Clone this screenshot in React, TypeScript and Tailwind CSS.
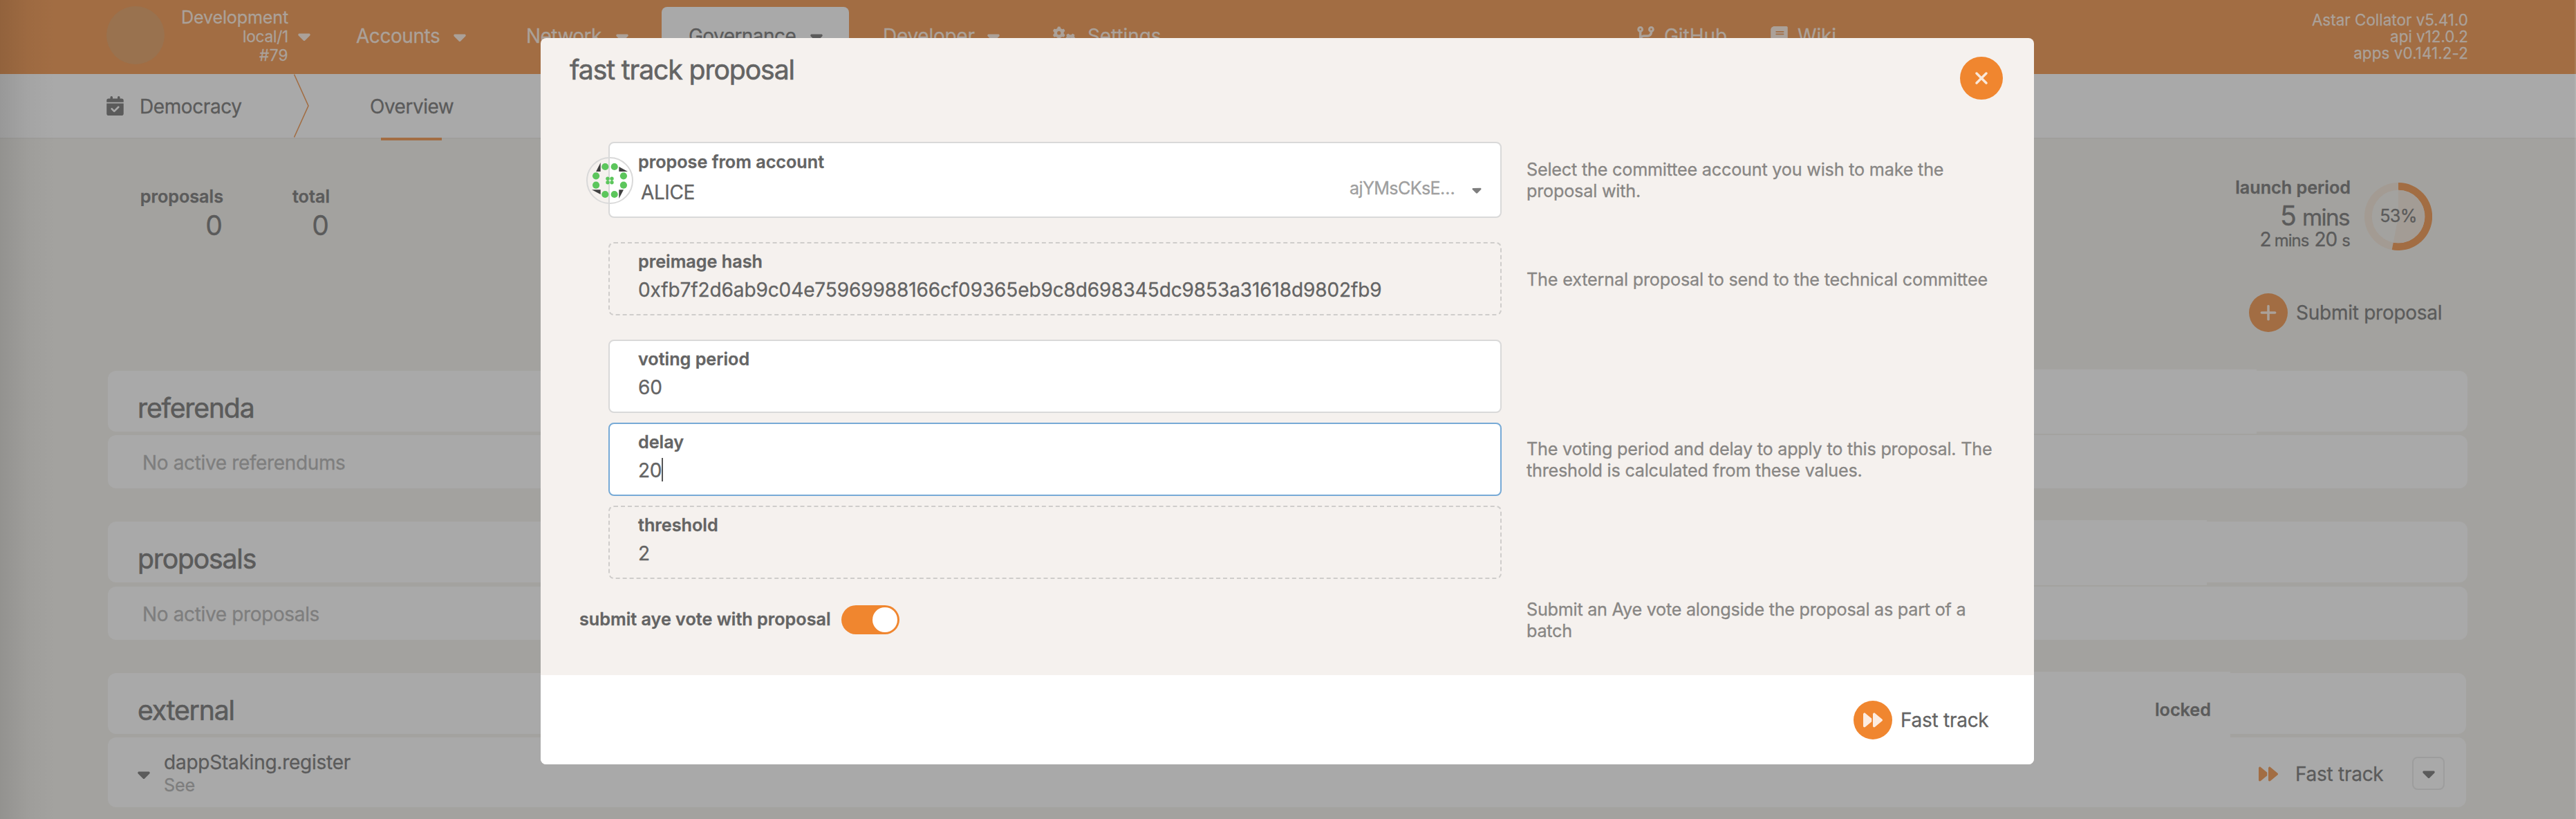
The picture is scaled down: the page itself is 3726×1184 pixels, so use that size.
import type { ReactNode } from "react";
import {
  FaBook,
  FaCalendarCheck,
  FaCaretDown,
  FaCodeBranch,
  FaForward,
  FaGears,
  FaPlus,
  FaXmark,
} from "react-icons/fa6";

function Caret({ className = "" }: { className?: string }) {
  return <FaCaretDown className={"h-[28px] w-[18px] shrink-0 " + className} />;
}

function Header() {
  return (
    <header className="flex h-[107px] items-center bg-[#a26d43] pb-[3px] text-[28px] leading-[36px] whitespace-nowrap text-[#aba199]">
      <div className="mb-[2px] ml-[154px] size-[84px] shrink-0 rounded-full bg-[#99724f]" />
      <div className="ml-[19px] w-[160px] text-right text-[22.7px] leading-[27px]">
        <div className="text-[25.2px] tracking-[-0.2px]">Development</div>
        <div className="tracking-[-0.27px]">local/1</div>
        <div className="tracking-[0.3px]">#79</div>
      </div>
      <Caret className="ml-[14px]" />
      <div className="ml-[66px] w-[141px] tracking-[-0.45px]">Accounts</div>
      <Caret className="mt-[2px]" />
      <div className="ml-[87px] w-[130px] tracking-[-0.53px]">Network</div>
      <Caret className="mt-[2px]" />
      <div className="mt-[10px] ml-[48px] flex h-[94px] w-[271px] items-center rounded-t-lg bg-[#a9a9a9] pb-[10px] pl-[39px] text-[#5b5b5b]">
        <div className="w-[176px] tracking-[-0.56px]">Governance</div>
        <Caret className="mt-[2px]" />
      </div>
      <div className="ml-[49px] w-[151px] tracking-[-0.27px]">Developer</div>
      <Caret className="mt-[2px]" />
      <FaGears className="ml-[77px] h-[28px] w-[35px] shrink-0" />
      <div className="ml-[15px] w-[110px] tracking-[-0.09px]">Settings</div>
      <FaCodeBranch className="ml-[685px] h-[28px] w-[25px] shrink-0" />
      <div className="ml-[14px] w-[95px] tracking-[-0.06px]">GitHub</div>
      <FaBook className="ml-[59px] h-[28px] w-[25px] shrink-0" />
      <div className="ml-[14px] w-[60px] tracking-[-0.13px]">Wiki</div>
      <div className="mt-[2px] mr-[156px] ml-auto text-right text-[22.4px] leading-[24.3px]">
        <div className="tracking-[0.02px]">Astar Collator v5.41.0</div>
        <div>api v12.0.2</div>
        <div className="tracking-[0.1px]">apps v0.141.2-2</div>
      </div>
    </header>
  );
}

function Tabs() {
  return (
    <nav className="flex h-[94px] items-center border-b-2 border-[#9f9e9c] bg-[#a9a9a9] text-[28px] leading-[36px] whitespace-nowrap">
      <FaCalendarCheck className="ml-[154px] h-[28px] w-[25px] shrink-0" />
      <div className="mt-[1px] ml-[23px] w-[223px] tracking-[-0.4px]">Democracy</div>
      <svg width="22" height="92" viewBox="0 0 22 92" fill="none" stroke="#a26d43" strokeWidth="1.6">
        <path d="M0.5 0.5 L21 46 L0.5 91.5" />
      </svg>
      <div className="relative ml-[88px] flex h-[92px] items-center pt-[1px] tracking-[-0.5px]">
        Overview
        <div className="absolute -bottom-[4px] left-[16px] h-[4px] w-[88px] bg-[#a26d43]" />
      </div>
    </nav>
  );
}

function Stat({ label, value, className }: { label: string; value: string; className: string }) {
  return (
    <div className={"mt-[13px] text-right " + className}>
      <div className="text-[25.2px] leading-[41px] font-semibold">{label}</div>
      <div className="pr-[2px] text-[39.2px] leading-[42px] tracking-[-1px]">{value}</div>
    </div>
  );
}

function Progress() {
  return (
    <div className="relative mt-[13px] mr-[208px] ml-[20px] flex size-[98px] shrink-0 items-center justify-center">
      <svg className="absolute inset-0" width="98" height="98" viewBox="0 0 98 98">
        <circle cx="49" cy="49" r="49" fill="#a39b93" />
        <path d="M49 49 L49 0 A49 49 0 1 1 39.8 97.1 Z" fill="#a26d43" />
        <circle cx="49" cy="49" r="38.3" fill="#a3a29f" />
        <path d="M49 49 L49 10.7 A38.3 38.3 0 1 1 41.8 86.6 Z" fill="#a39c95" />
      </svg>
      <span className="relative text-[25.2px] leading-none tracking-[-0.7px]">53%</span>
    </div>
  );
}

function Summary() {
  return (
    <section className="h-[335px] pt-[50px] whitespace-nowrap">
      <div className="flex h-[120px] items-start">
        <Stat label="proposals" value="0" className="ml-[201px] w-[122px]" />
        <Stat label="total" value="0" className="ml-[94px] w-[60px]" />
        <div className="ml-auto text-right">
          <div className="text-[25.2px] leading-[40px] font-semibold">launch period</div>
          <div className="h-[42px] pr-[2px] text-[39.2px] leading-[42px]">
            5<span className="ml-[8px] text-[33.3px] leading-none tracking-[-1.6px]">mins</span>
          </div>
          <div className="h-[26px] pr-[1px] text-[28px] leading-[26px] tracking-[-0.9px]">
            2<span className="ml-[5px] text-[23.8px] leading-none">mins</span>
            <span className="ml-[8px]">20</span>
            <span className="ml-[7px] text-[23.8px] leading-none">s</span>
          </div>
        </div>
        <Progress />
      </div>
      <div className="mt-[53px] mr-[192px] flex items-center justify-end gap-[12px]">
        <div className="flex size-[56px] items-center justify-center rounded-full bg-[#a26d43] text-[#aba199]">
          <FaPlus className="size-[28px]" />
        </div>
        <div className="w-[213px] text-[28px] leading-[36px] tracking-[-0.26px]">Submit proposal</div>
      </div>
    </section>
  );
}

function TableHead({ title, fill, children }: { title: string; fill: string; children?: ReactNode }) {
  return (
    <div className="relative flex h-[88px] items-center justify-between rounded-xl bg-[#a9a9a9] pt-[19px] pl-[43px]">
      <div className={"absolute bg-[#a9a9a9] " + fill} />
      <h1 className="relative text-[39.2px] leading-[48px] tracking-[-1.2px] [-webkit-text-stroke-width:0.6px]">{title}</h1>
      {children}
    </div>
  );
}

function EmptyRow({ text }: { text: string }) {
  return (
    <div className="mt-[5px] flex h-[77px] items-center rounded-xl bg-[#a9a9a9] pt-[3px] pl-[50px] text-[28px] tracking-[-0.36px] text-[#7e7e7e]">
      {text}
    </div>
  );
}

function Tables() {
  return (
    <main className="ml-[156px] w-[3413px] whitespace-nowrap">
      <TableHead title="referenda" fill="-top-[2px] -bottom-[3px] left-[2000px] right-[305px]" />
      <EmptyRow text="No active referendums" />
      <div className="mt-[48px]">
        <TableHead title="proposals" fill="-top-[2px] -bottom-[4px] left-[2000px] right-[377px]" />
      </div>
      <div className="mt-[6px]">
        <EmptyRow text="No active proposals" />
      </div>
      <div className="mt-[48px] w-[3411px]">
        <TableHead title="external" fill="-top-[2px] -bottom-[5px] left-[2000px] right-[341px]">
          <div className="relative mr-[369px] text-[25.2px] font-semibold">locked</div>
        </TableHead>
        <div className="mt-[5px] flex h-[101px] items-center rounded-xl bg-[#a9a9a9] pt-[4px] pr-[31px] pl-[43px] text-[28px]">
          <Caret />
          <div className="ml-[20px]">
            <div className="leading-[33px] tracking-[-0.24px]">dappStaking.register</div>
            <div className="text-[25.2px] leading-[32px] tracking-[-0.2px] text-[#7e7e7e]">See</div>
          </div>
          <FaForward className="ml-auto size-[28px] text-[#a26d43]" />
          <div className="ml-[25px] w-[169px] leading-[36px] tracking-[-0.27px]">Fast track</div>
          <div className="mb-[2px] flex h-[48px] w-[47px] items-center justify-center rounded-lg border-2 border-[#9d9d9d]">
            <Caret className="mt-[1px]" />
          </div>
        </div>
      </div>
    </main>
  );
}

const OUTER_DOTS = [
  [27.3, 14], [40.7, 14], [14.1, 27.3], [53.9, 27.3],
  [14.1, 40.7], [53.9, 40.7], [27.3, 54], [40.7, 54],
];
const INNER_DOTS = [[31, 31.2], [37, 31.2], [31, 36.8], [37, 36.8]];

function Identicon() {
  return (
    <svg className="absolute top-[20px] -left-[34px]" width="68" height="68" viewBox="0 0 68 68">
      <circle cx="34" cy="34" r="33" fill="none" stroke="#d9d9d9" strokeWidth="2" />
      <g fill="#404040">
        <path d="M14.1 21 L20.7 8 V21 Z" />
        <path d="M47.3 14 L60 21 H47.3 Z" />
        <path d="M8 47.3 H20.7 V54 Z" />
        <path d="M47.3 47.3 H54 L47.3 60 Z" />
      </g>
      <g fill="#5cc65c">
        {OUTER_DOTS.map(([x, y]) => <circle key={x + "-" + y} cx={x} cy={y} r="5.1" />)}
        {INNER_DOTS.map(([x, y]) => <circle key={x + "-" + y} cx={x} cy={y} r="2.7" />)}
      </g>
    </svg>
  );
}

function Field({ label, className, children }: { label: string; className: string; children: ReactNode }) {
  return (
    <div className={"h-[106px] w-[1292px] shrink-0 rounded-lg border-2 pt-[10px] pl-[41px] " + className}>
      <div className="text-[25.2px] leading-[32px] font-semibold">{label}</div>
      <div className="mt-[7px] flex h-[36px] items-center text-[28px] leading-[36px]">{children}</div>
    </div>
  );
}

function Help({ lines, className }: { lines: string[]; className: string }) {
  return (
    <div className={"ml-[36px] pt-[2px] text-[25.2px] leading-[30.8px] text-[#888684] " + className}>
      {lines.map((line) => <div key={line}>{line}</div>)}
    </div>
  );
}

function Modal() {
  return (
    <div className="absolute top-[55px] left-[782px] w-[2160px] overflow-hidden rounded-lg bg-[#f5f1ee] whitespace-nowrap text-[#646464]">
      <div className="flex h-[150px] items-start pr-[45px] pl-[42px]">
        <h1 className="text-[39.2px] leading-[92px] tracking-[-1.12px] [-webkit-text-stroke-width:0.6px]">
          fast track proposal
        </h1>
        <div className="mt-[27px] ml-auto flex size-[62px] items-center justify-center rounded-full bg-[#f0862f] text-[#f9e8da]">
          <FaXmark className="size-[28px]" />
        </div>
      </div>

      <div className="ml-[98px]">
        <div className="flex items-center">
          <div className="relative h-[110px] w-[1292px] shrink-0 rounded-lg border-2 border-[#d9d9d9] bg-white pt-[11px] pr-[27px] pl-[41px]">
            <div className="text-[25.2px] leading-[32px] font-semibold">propose from account</div>
            <div className="mt-[10px] flex items-center pl-[4px] text-[28px] leading-[36px]">
              <div className="tracking-[-0.4px]">ALICE</div>
              <div className="-mt-[12px] ml-auto text-[25.2px] tracking-[-0.7px] text-[#9f9f9f]">ajYMsCKsE…</div>
              <FaCaretDown className="-mt-[7px] ml-[25px] h-[21px] w-[14px] text-[#7e7e7e]" />
            </div>
            <Identicon />
          </div>
          <Help
            className="tracking-[-0.2px]"
            lines={["Select the committee account you wish to make the", "proposal with."]}
          />
        </div>

        <div className="mt-[35px] flex items-center">
          <Field label="preimage hash" className="border-dashed border-[#cfcdcb]">
            <span className="tracking-[-0.11px]">0xfb7f2d6ab9c04e75969988166cf09365eb9c8d698345dc9853a31618d9802fb9</span>
          </Field>
          <Help className="tracking-[-0.18px]" lines={["The external proposal to send to the technical committee"]} />
        </div>

        <div className="mt-[35px] flex items-center">
          <div className="flex flex-col gap-[14px]">
            <Field label="voting period" className="border-[#d9d9d9] bg-white">60</Field>
            <Field label="delay" className="border-[#77aad6] bg-white">
              <span className="w-[34px] tracking-[-0.3px]">20</span>
              <span className="-mt-[2px] h-[34px] w-[2px] bg-[#555555]" />
            </Field>
            <Field label="threshold" className="border-dashed border-[#cfcdcb]">2</Field>
          </div>
          <Help
            className="tracking-[-0.22px]"
            lines={["The voting period and delay to apply to this proposal. The", "threshold is calculated from these values."]}
          />
        </div>
      </div>

      <div className="mt-[28px] flex h-[62px] items-center pl-[56px]">
        <div className="w-[379px] text-[25.2px] font-semibold">submit aye vote with proposal</div>
        <div className="flex h-[42px] w-[84px] items-center justify-end rounded-full bg-[#f0862f] pr-[3px]">
          <div className="size-[36px] rounded-full bg-white" />
        </div>
        <div className="ml-[871px]">
          <Help
            className="tracking-[-0.25px]"
            lines={["Submit an Aye vote alongside the proposal as part of a", "batch"]}
          />
        </div>
      </div>

      <div className="mt-[49px] flex h-[129px] items-center justify-end gap-[12px] bg-white pr-[65px]">
        <div className="flex size-[56px] items-center justify-center rounded-full bg-[#f0862f] text-[#fdece0]">
          <FaForward className="size-[28px]" />
        </div>
        <div className="w-[128px] text-[28px] leading-[36px] tracking-[-0.27px]">Fast track</div>
      </div>
    </div>
  );
}

export default function App() {
  return (
    <div className="relative h-[1184px] w-[3726px] overflow-hidden bg-[#a3a29f] font-['Inter',sans-serif] text-[#5b5b5b] [-webkit-text-stroke-width:0.3px]">
      <Header />
      <Tabs />
      <Summary />
      <Tables />
      <div className="absolute inset-y-0 left-0 w-[80px] bg-gradient-to-r from-black/10 via-black/3 to-transparent" />
      <div className="absolute inset-y-0 right-0 w-[2px] bg-white/10" />
      <Modal />
    </div>
  );
}
